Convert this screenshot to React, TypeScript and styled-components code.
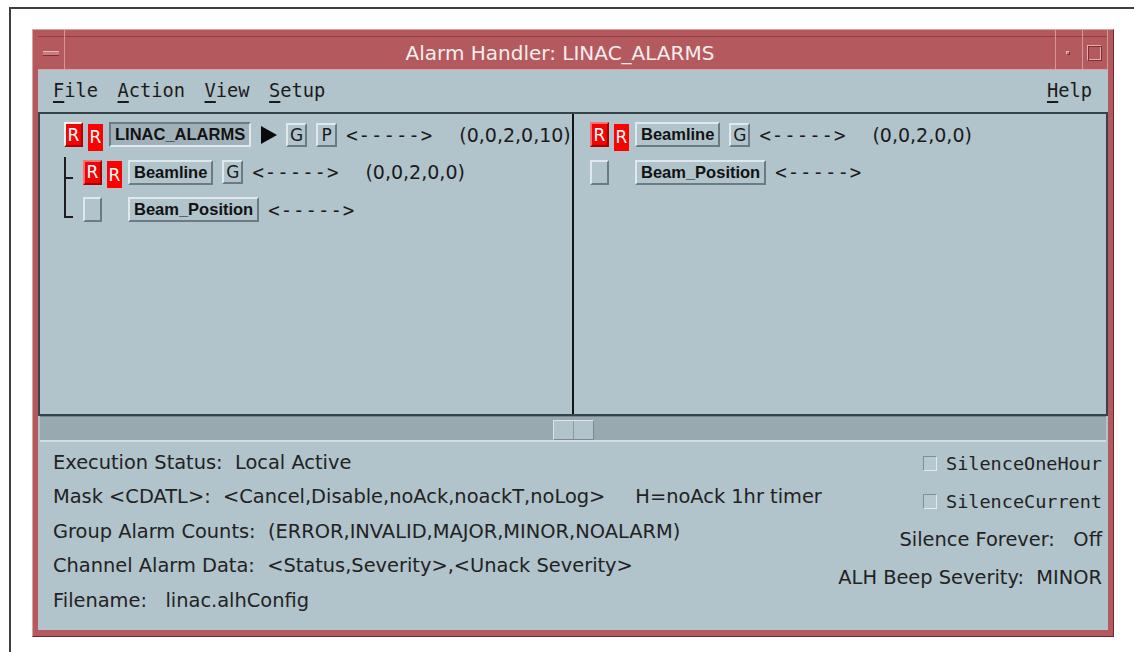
import React from 'react';
import styled, { createGlobalStyle } from 'styled-components';

const GlobalStyle = createGlobalStyle`
  html, body {
    margin: 0;
    padding: 0;
    background: #ffffff;
  }
  body {
    width: 1134px;
    height: 652px;
    overflow: hidden;
  }
`;

const SANS = `"DejaVu Sans", "Liberation Sans", sans-serif`;
const MONO = `"DejaVu Sans Mono", "Liberation Mono", monospace`;
const BOLD = `"Liberation Sans", Arial, sans-serif`;

const BG = '#b1c3cb';
const HI = '#dfe9ed';
const LO = '#6b7b82';

/* desktop sheet the window sits on */
const Sheet = styled.div`
  box-sizing: border-box;
  margin: 7px 0 0 9px;
  height: 645px;
  border-top: 2px solid #3e3e3e;
  border-left: 2px solid #3e3e3e;
  padding: 20px 0 0 21px;
`;

/* window-manager frame */
const Frame = styled.div`
  box-sizing: border-box;
  width: 1082px;
  height: 608px;
  display: flex;
  flex-direction: column;
  background: #b45a5e;
  border: 1px solid;
  border-color: #dba2a4 #6a2a2d #6a2a2d #dba2a4;
  padding: 0 5px 6px 5px;
`;

const TitleBar = styled.div`
  box-sizing: border-box;
  height: 40px;
  display: flex;
  align-items: stretch;
  border-bottom: 1px solid #dca4a6;
  background: linear-gradient(#b45a5e 6px, #8e3d41 6px, #8e3d41 7px, #b45a5e 7px);
`;

const TitleButton = styled.div<{ $w: number }>`
  width: ${p => p.$w}px;
  flex: none;
  box-sizing: border-box;
  display: flex;
  align-items: center;
  justify-content: center;
  padding-top: 7px;
  border-left: 1px solid #d59699;
  border-right: 1px solid #d59699;
  &:first-child {
    border-left: none;
  }
  & + & {
    border-left: none;
  }
`;

const Title = styled.div`
  flex: 1;
  display: flex;
  align-items: center;
  justify-content: center;
  padding-top: 7px;
  font-family: ${SANS};
  font-size: 20px;
  color: #f6eeee;
  white-space: nowrap;
`;

const MenuGlyph = styled.span`
  box-sizing: border-box;
  width: 16px;
  height: 5px;
  background: #c87c7f;
  border-top: 1px solid #e9b5b7;
  border-bottom: 1px solid #7a3033;
`;

const MinGlyph = styled.span`
  box-sizing: border-box;
  width: 4px;
  height: 4px;
  background: #c87c7f;
  border: 1px solid;
  border-color: #e9b5b7 #7a3033 #7a3033 #e9b5b7;
  margin-right: 2px;
`;

const MaxGlyph = styled.span`
  box-sizing: border-box;
  width: 15px;
  height: 16px;
  margin-right: 1px;
  border: 1px solid;
  border-color: #e2aeb0 #7a3033 #7a3033 #e2aeb0;
  box-shadow: inset 1px 1px 0 #7a3033, inset -1px -1px 0 #e2aeb0;
`;

const Body = styled.div`
  flex: 1;
  min-height: 0;
  display: flex;
  flex-direction: column;
  background: ${BG};
`;

const MenuBar = styled.div`
  height: 42px;
  flex: none;
  display: flex;
  align-items: center;
  gap: 19.5px;
  padding: 0 16px 2px 15px;
  box-sizing: border-box;
  font-family: ${MONO};
  font-size: 18.7px;
  color: #1b1b1b;
`;

const MenuItem = styled.span<{ $push?: boolean }>`
  margin-left: ${p => (p.$push ? 'auto' : '0')};
`;

const Mnemonic = styled.span`
  text-decoration: underline;
  text-decoration-thickness: 2px;
  text-underline-offset: 4px;
`;

const Panes = styled.div`
  height: 304px;
  flex: none;
  box-sizing: border-box;
  display: grid;
  grid-template-columns: 1fr 2px 1fr;
  border: 2px solid #36434a;
`;

const Pane = styled.div<{ $indent: number }>`
  padding: 2px 0 0 ${p => p.$indent}px;
  overflow: hidden;
  min-width: 0;
`;

const Divider = styled.div`
  background: #141414;
`;

const Row = styled.div`
  height: 37.5px;
  display: flex;
  align-items: center;
  white-space: nowrap;
`;

/* tree connector drawn with two pseudo lines */
const Guide = styled.span<{ $last?: boolean }>`
  align-self: stretch;
  flex: none;
  width: 19px;
  position: relative;
  &::before {
    content: '';
    position: absolute;
    left: 0;
    width: 2px;
    top: ${p => (p.$last ? '0' : '3.5px')};
    height: ${p => (p.$last ? '27px' : 'calc(100% - 3.5px)')};
    background: #1d1d1d;
  }
  &::after {
    content: '';
    position: absolute;
    left: 0;
    width: 9px;
    height: 2px;
    top: ${p => (p.$last ? '25px' : '23px')};
    background: #1d1d1d;
  }
`;

const AckButton = styled.span<{ $focus?: boolean }>`
  box-sizing: border-box;
  flex: none;
  width: 19px;
  height: 25px;
  display: flex;
  align-items: center;
  justify-content: center;
  background: #f20404;
  border: 2px solid;
  border-color: ${p => (p.$focus ? '#f2f2f2 #b40000 #b40000 #f2f2f2' : '#ff7070 #a80000 #a80000 #ff7070')};
  color: #ffffff;
  font-family: ${SANS};
  font-size: 17px;
`;

const SevFlag = styled.span`
  box-sizing: border-box;
  flex: none;
  width: 15px;
  height: 27px;
  margin: 5px 0 0 5px;
  display: flex;
  align-items: center;
  justify-content: center;
  background: #ff0000;
  color: #ffffff;
  font-family: ${SANS};
  font-size: 17px;
`;

const EmptySlot = styled.span`
  flex: none;
  width: 15px;
  margin-left: 5px;
`;

const BlankButton = styled.span`
  box-sizing: border-box;
  flex: none;
  width: 19px;
  height: 25px;
  background: ${BG};
  border: 2px solid;
  border-color: ${HI} ${LO} ${LO} ${HI};
`;

const NameButton = styled.span<{ $selected?: boolean }>`
  box-sizing: border-box;
  flex: none;
  height: 25px;
  margin-left: 6px;
  padding: 0 4px;
  display: flex;
  align-items: center;
  background: ${p => (p.$selected ? '#a0b1b9' : BG)};
  border: 2px solid;
  border-color: ${p => (p.$selected ? `${LO} ${HI} ${HI} ${LO}` : `${HI} ${LO} ${LO} ${HI}`)};
  font-family: ${BOLD};
  font-weight: bold;
  font-size: 16.5px;
  color: #121212;
`;

const SmallButton = styled.span`
  box-sizing: border-box;
  flex: none;
  width: 21px;
  height: 24px;
  margin-left: 9px;
  display: flex;
  align-items: center;
  justify-content: center;
  background: ${BG};
  border: 2px solid;
  border-color: ${HI} ${LO} ${LO} ${HI};
  font-family: ${SANS};
  font-size: 17px;
  color: #1a1a1a;
`;

const Expand = styled.svg`
  flex: none;
  width: 16px;
  height: 18px;
  margin-left: 10px;
`;

const LinkText = styled.span`
  margin-left: 9px;
  font-family: ${MONO};
  font-size: 19px;
  letter-spacing: 1px;
  color: #1a1a1a;
`;

const Counts = styled.span`
  margin-left: 26px;
  font-family: ${SANS};
  font-size: 19px;
  color: #1a1a1a;
`;

const ScrollTrack = styled.div`
  box-sizing: border-box;
  height: 26px;
  flex: none;
  margin: 0 2px;
  display: flex;
  justify-content: center;
  align-items: flex-end;
  background: #98a9b0;
  border-top: 1px solid #75868d;
  border-bottom: 2px solid #d3dee3;
`;

const Thumb = styled.div`
  box-sizing: border-box;
  width: 41px;
  height: 20px;
  display: grid;
  grid-template-columns: 1fr 1px 1fr;
  background: ${BG};
  border: 1px solid;
  border-color: #dde7eb #7a8a91 #7a8a91 #dde7eb;
`;

const ThumbNotch = styled.span`
  grid-column: 2;
  background: #8a9aa1;
`;

const Status = styled.div`
  flex: 1;
  display: flex;
  justify-content: space-between;
  padding: 0 6px 0 15px;
  font-family: ${SANS};
  font-size: 19.4px;
  color: #222222;
`;

const InfoColumn = styled.div`
  display: flex;
  flex-direction: column;
  padding-top: 3.5px;
`;

const InfoLine = styled.div`
  height: 34.5px;
  line-height: 34.5px;
  white-space: pre;
`;

const Note = styled.span`
  margin-left: 30px;
`;

const ControlColumn = styled.div`
  display: flex;
  flex-direction: column;
  align-items: flex-end;
  padding-top: 2px;
`;

const ControlLine = styled.div<{ $mono?: boolean }>`
  height: 38px;
  display: flex;
  align-items: center;
  white-space: pre;
  font-family: ${p => (p.$mono ? MONO : SANS)};
  font-size: ${p => (p.$mono ? '18.5px' : '19.4px')};
`;

const Toggle = styled.span`
  box-sizing: border-box;
  width: 14px;
  height: 15px;
  margin-right: 9px;
  background: #b7c8cf;
  border: 1px solid;
  border-color: #7f8f96 #e2eaee #e2eaee #7f8f96;
`;

type Item = {
  name: string;
  alarm: boolean;
  focus?: boolean;
  selected?: boolean;
  expand?: boolean;
  group?: boolean;
  p?: boolean;
  counts?: string;
};

const TreeRow: React.FC<{ item: Item; guide?: 'mid' | 'last' }> = ({ item, guide }) => (
  <Row>
    {guide && <Guide $last={guide === 'last'} />}
    {item.alarm ? (
      <>
        <AckButton $focus={item.focus}>R</AckButton>
        <SevFlag>R</SevFlag>
      </>
    ) : (
      <>
        <BlankButton />
        <EmptySlot />
      </>
    )}
    <NameButton $selected={item.selected}>{item.name}</NameButton>
    {item.expand && (
      <Expand viewBox="0 0 16 18">
        <polygon points="0,0 16,9 0,18" fill="#0a0a0a" />
      </Expand>
    )}
    {item.group && <SmallButton>G</SmallButton>}
    {item.p && <SmallButton>P</SmallButton>}
    <LinkText>{'<----->'}</LinkText>
    {item.counts && <Counts>{item.counts}</Counts>}
  </Row>
);

export default function App() {
  return (
    <>
      <GlobalStyle />
      <Sheet>
        <Frame>
          <TitleBar>
            <TitleButton $w={27}>
              <MenuGlyph />
            </TitleButton>
            <Title>Alarm Handler: LINAC_ALARMS</Title>
            <TitleButton $w={28}>
              <MinGlyph />
            </TitleButton>
            <TitleButton $w={25}>
              <MaxGlyph />
            </TitleButton>
          </TitleBar>
          <Body>
            <MenuBar>
              <MenuItem><Mnemonic>F</Mnemonic>ile</MenuItem>
              <MenuItem><Mnemonic>A</Mnemonic>ction</MenuItem>
              <MenuItem><Mnemonic>V</Mnemonic>iew</MenuItem>
              <MenuItem><Mnemonic>S</Mnemonic>etup</MenuItem>
              <MenuItem $push><Mnemonic>H</Mnemonic>elp</MenuItem>
            </MenuBar>
            <Panes>
              <Pane $indent={24}>
                <TreeRow
                  item={{ name: 'LINAC_ALARMS', alarm: true, focus: true, selected: true, expand: true, group: true, p: true, counts: '(0,0,2,0,10)' }}
                />
                <TreeRow guide="mid" item={{ name: 'Beamline', alarm: true, group: true, counts: '(0,0,2,0,0)' }} />
                <TreeRow guide="last" item={{ name: 'Beam_Position', alarm: false }} />
              </Pane>
              <Divider />
              <Pane $indent={16}>
                <TreeRow item={{ name: 'Beamline', alarm: true, group: true, counts: '(0,0,2,0,0)' }} />
                <TreeRow item={{ name: 'Beam_Position', alarm: false }} />
              </Pane>
            </Panes>
            <ScrollTrack>
              <Thumb>
                <ThumbNotch />
              </Thumb>
            </ScrollTrack>
            <Status>
              <InfoColumn>
                <InfoLine>Execution Status:  Local Active</InfoLine>
                <InfoLine>
                  Mask {'<CDATL>'}:  {'<Cancel,Disable,noAck,noackT,noLog>'}
                  <Note>H=noAck 1hr timer</Note>
                </InfoLine>
                <InfoLine>Group Alarm Counts:  (ERROR,INVALID,MAJOR,MINOR,NOALARM)</InfoLine>
                <InfoLine>Channel Alarm Data:  {'<Status,Severity>,<Unack Severity>'}</InfoLine>
                <InfoLine>Filename:   linac.alhConfig</InfoLine>
              </InfoColumn>
              <ControlColumn>
                <ControlLine $mono>
                  <Toggle />
                  SilenceOneHour
                </ControlLine>
                <ControlLine $mono>
                  <Toggle />
                  SilenceCurrent
                </ControlLine>
                <ControlLine>Silence Forever:   Off</ControlLine>
                <ControlLine>ALH Beep Severity:  MINOR</ControlLine>
              </ControlColumn>
            </Status>
          </Body>
        </Frame>
      </Sheet>
    </>
  );
}
